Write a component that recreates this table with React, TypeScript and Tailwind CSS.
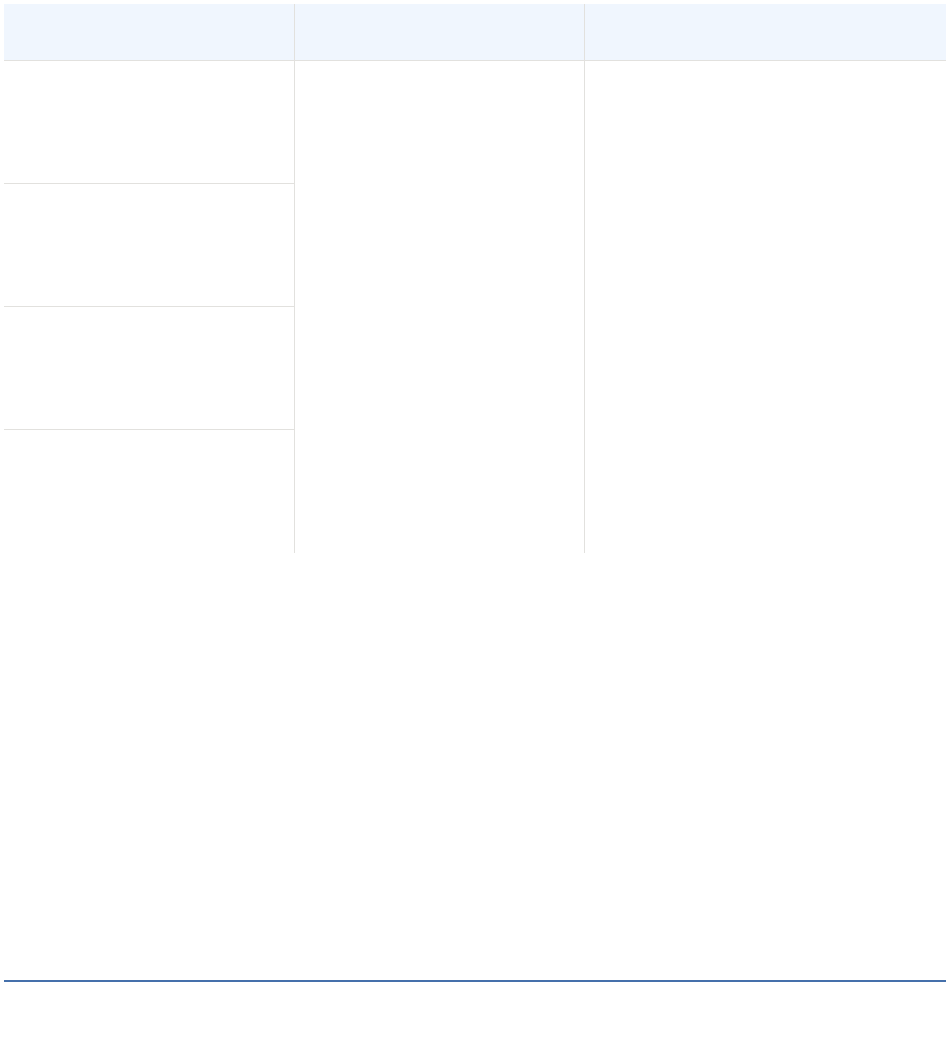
export default function App() {
    const rows = [0, 1, 2, 3];
    return (
        <div className="min-h-screen bg-white p-1 font-['Liberation_Sans',sans-serif]">
            {/* header */}
            <div className="grid grid-cols-[290px_290px_1fr]">
                <div className="h-[57px] border-b border-[#e2e1de] bg-[#f0f6fe]" />
                <div className="h-[57px] border-b border-l border-[#e2e1de] bg-[#f0f6fe]" />
                <div className="h-[57px] border-b border-l border-[#e2e1de] bg-[#f0f6fe]" />
            </div>

            {/* body */}
            <div className="flex">
                <div className="flex w-[290px] flex-col">
                    {rows.map((i) => (
                        <div
                            key={i}
                            className={
                                i < rows.length - 1
                                    ? "h-[123px] border-b border-[#e2e1de]"
                                    : "h-[123px]"
                            }
                        />
                    ))}
                </div>
                <div className="h-[492px] w-[290px] border-l border-[#e2e1de]" />
                <div className="h-[492px] flex-1 border-l border-[#e2e1de]" />
            </div>

            {/* footer rule */}
            <div className="mt-[427px] h-[2px] w-full bg-[#4570ab]" />
        </div>
    );
}
